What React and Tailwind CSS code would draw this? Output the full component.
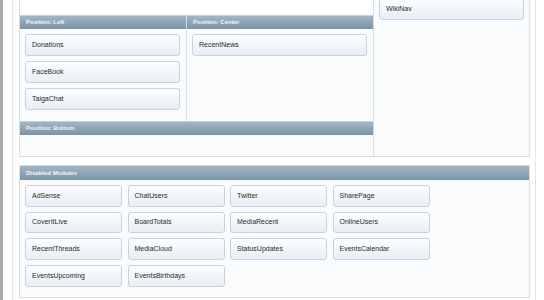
import React from "react";

const font = { fontFamily: '"Liberation Sans", Arial, sans-serif' };

function Btn({ label, className = "" }) {
  return (
    <div
      className={`h-[21.5px] flex items-center pl-[6px] rounded-[3px] border border-[#c9d2da] bg-gradient-to-b from-[#fdfeff] to-[#e7eef5] text-[7px] text-[#2a2a2a] ${className}`}
    >
      {label}
    </div>
  );
}

function Header({ children, className = "" }) {
  return (
    <div
      className={`h-[14px] flex items-center pl-[6px] bg-gradient-to-b from-[#a2b6c5] to-[#7a94a7] border-t border-[#c3d0da] text-[6px] font-bold text-[#f2f6f9] ${className}`}
    >
      {children}
    </div>
  );
}

export default function App() {
  const disabled = [
    "AdSense", "ChatUsers", "Twitter", "SharePage",
    "CoverItLive", "BoardTotals", "MediaRecent", "OnlineUsers",
    "RecentThreads", "MediaCloud", "StatusUpdates", "EventsCalendar",
    "EventsUpcoming", "EventsBirthdays",
  ];
  return (
    <div className="w-[544px] h-[300px] bg-white flex overflow-hidden" style={font}>
      <div className="w-[3px] bg-[#a9abad]" />
      <div className="w-[9px]" />
      <div className="w-px bg-[#e3e7ea]" />
      <div className="w-[6px]" />
      <div className="w-[511px] flex flex-col">
        {/* top panel */}
        <div className="h-[157px] flex border-x border-b border-[#d6dee4] bg-[#fafbfd]">
          <div className="w-[353px] flex flex-col">
            <div className="h-[15px] bg-white" />
            <div className="flex">
              <Header className="w-[166px]">Position: Left</Header>
              <div className="w-px bg-[#d6dee4]" />
              <Header className="flex-1">Position: Center</Header>
            </div>
            <div className="flex h-[92px]">
              <div className="w-[166px] flex flex-col gap-[5.5px] pl-[5px] pr-[6px] pt-[5px]">
                <Btn label="Donations" />
                <Btn label="FaceBook" />
                <Btn label="TaigaChat" />
              </div>
              <div className="w-px bg-[#d6dee4]" />
              <div className="flex-1 flex flex-col pl-[5px] pr-[6px] pt-[5px]">
                <Btn label="RecentNews" />
              </div>
            </div>
            <Header>Position: Bottom</Header>
          </div>
          <div className="w-px bg-[#d6dee4]" />
          <div className="flex-1 pl-[5px] pr-[5px] -mt-[2px]">
            <Btn label="WikiNav" />
          </div>
        </div>
        <div className="h-[8px]" />
        {/* disabled modules */}
        <div className="h-[133px] border border-[#d6dee4] bg-[#fafbfd] flex flex-col">
          <Header className="border-t-0">Disabled Modules</Header>
          <div className="grid grid-cols-[97px_97px_97px_97px] gap-x-[5.5px] gap-y-[5.2px] pl-[5px] pt-[5px]">
            {disabled.map((d) => (
              <Btn key={d} label={d} />
            ))}
          </div>
        </div>
      </div>
      <div className="w-[5px]" />
      <div className="w-px bg-[#e3e7ea]" />
      <div className="flex-1" />
    </div>
  );
}
